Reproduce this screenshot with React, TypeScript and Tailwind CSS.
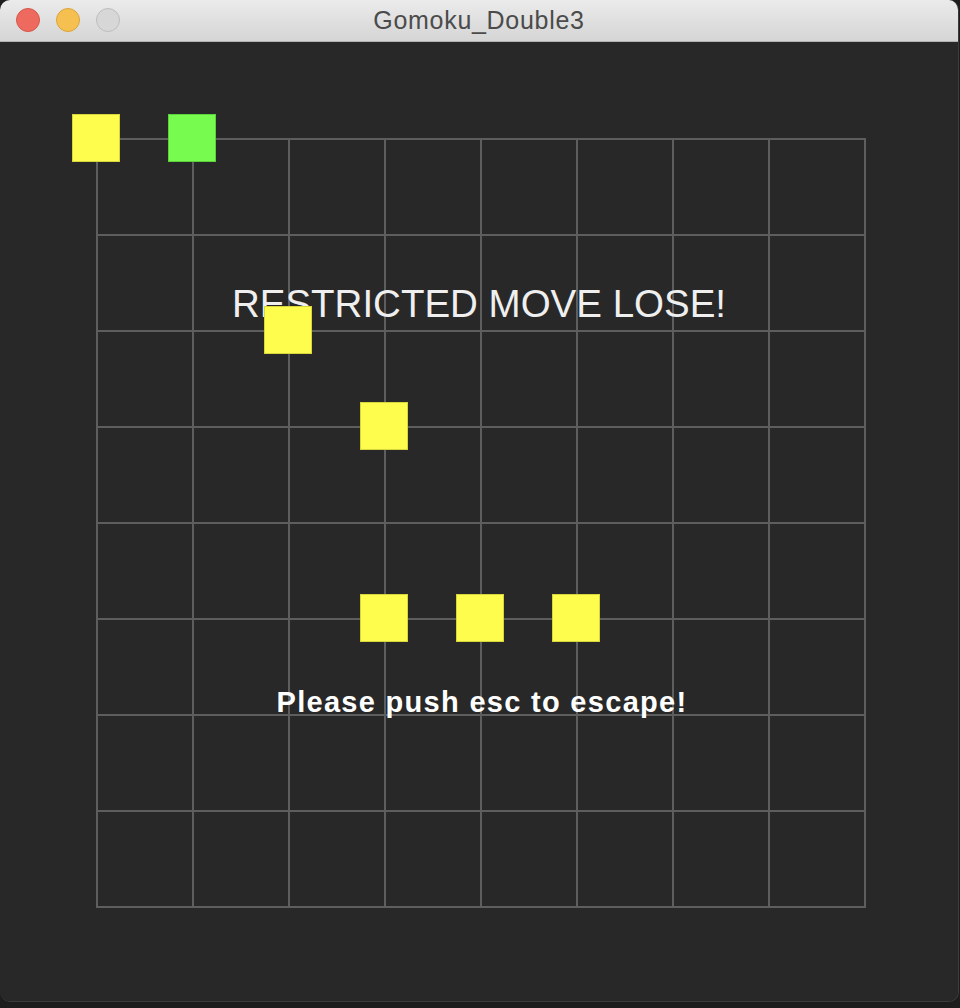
import React from "react";

const stones: { c: number; r: number; color: "y" | "g" }[] = [
  { c: 0, r: 0, color: "y" },
  { c: 1, r: 0, color: "g" },
  { c: 2, r: 2, color: "y" },
  { c: 3, r: 3, color: "y" },
  { c: 3, r: 5, color: "y" },
  { c: 4, r: 5, color: "y" },
  { c: 5, r: 5, color: "y" },
];

const lines = Array.from({ length: 9 }, (_, i) => i);

export default function App() {
  return (
    <div className="w-[960px] h-[1008px] bg-[#1d1d1d] font-['Liberation_Sans',Arial,sans-serif]">
      <div className="w-[959px] h-[1002px] rounded-[10px] overflow-hidden flex flex-col border-r border-b border-[#3c3c3c]">
        {/* title bar */}
        <div className="relative h-[42px] shrink-0 bg-gradient-to-b from-[#ebebeb] to-[#d5d5d5] border-b border-[#b3b3b3] flex items-center justify-center">
          <div className="absolute left-[16px] top-[8px] flex gap-[16px]">
            <span className="w-[24px] h-[24px] rounded-full bg-[#ee6a5f] border border-[#d5574c]" />
            <span className="w-[24px] h-[24px] rounded-full bg-[#f5c04f] border border-[#d9a53c]" />
            <span className="w-[24px] h-[24px] rounded-full bg-[#d7d7d7] border border-[#bdbdbd]" />
          </div>
          <span className="text-[25px] text-[#4b4b4b] tracking-[0.7px]">Gomoku_Double3</span>
        </div>

        {/* game canvas */}
        <div className="relative flex-1 bg-[#282828]">
          <svg className="absolute left-0 top-0" width="958" height="960">
            {lines.map((i) => (
              <rect key={"v" + i} x={96 + 96 * i} y={96} width={2} height={770} fill="#5e5e5e" />
            ))}
            {lines.map((i) => (
              <rect key={"h" + i} x={96} y={96 + 96 * i} width={770} height={2} fill="#5e5e5e" />
            ))}
          </svg>

          <div className="absolute left-0 right-0 top-[243px] flex justify-center">
            <span className="text-[38.5px] leading-none text-[#efefef]">RESTRICTED MOVE LOSE!</span>
          </div>

          <div className="absolute left-0 right-0 top-[646px] flex justify-center">
            <span className="text-[29px] leading-none font-bold text-white tracking-[1.3px] pl-[6px]">
              Please push esc to escape!
            </span>
          </div>

          {stones.map((s, i) => (
            <div
              key={i}
              className={
                "absolute w-[48px] h-[48px] border " +
                (s.color === "y" ? "bg-[#fefd4e] border-[#d8d63c]" : "bg-[#76fb4e] border-[#5ed23c]")
              }
              style={{ left: 72 + 96 * s.c, top: 72 + 96 * s.r }}
            />
          ))}
        </div>
      </div>
    </div>
  );
}
